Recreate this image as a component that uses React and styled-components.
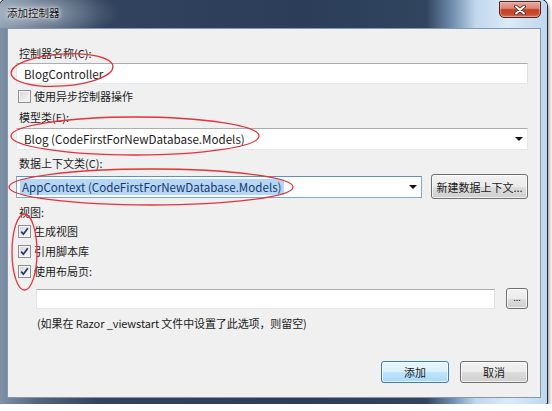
import React from 'react';
import styled, { createGlobalStyle } from 'styled-components';

const GlobalStyle = createGlobalStyle`
  html, body {
    margin: 0;
    padding: 0;
    background: #ffffff;
  }
  body {
    font-family: "Noto Sans CJK SC", "Noto Sans", sans-serif;
    font-size: 11px;
    color: #1b1b1b;
  }
`;

const Window = styled.div`
  position: relative;
  width: 547px;
  height: 404px;
  box-sizing: border-box;
  display: flex;
  flex-direction: column;
  border-radius: 6px 6px 2px 2px;
  background: linear-gradient(to right, #7f91a6 0%, #52657e 7%, #31435e 18%, #2b3d59 55%, #31455f 78%, #7593b2 83%, #c2d8ed 87%, #dbeaf7 93%, #bfd7ee 100%);
  box-shadow: 0 0 0 1px #1c2738, 2px 3px 4px rgba(0, 0, 0, 0.45);
`;

const TitleBar = styled.div`
  height: 28px;
  display: flex;
  align-items: flex-start;
  justify-content: space-between;
  padding: 0 6px 0 7px;
  border-radius: 6px 6px 0 0;
  background: radial-gradient(ellipse 90px 26px at 30px 13px, rgba(220, 226, 234, 0.55), rgba(220, 226, 234, 0) 100%);
`;

const Title = styled.div`
  margin-top: 5px;
  line-height: 16px;
  font-size: 10.5px;
  color: #141414;
  text-shadow: 0 0 6px rgba(255, 255, 255, 0.9), 0 0 3px rgba(255, 255, 255, 0.8);
`;

const CloseButton = styled.div`
  width: 42px;
  height: 17px;
  margin-top: 1px;
  box-sizing: border-box;
  border: 1px solid #4d2621;
  border-radius: 1px 1px 5px 5px;
  background: linear-gradient(#e9ab9c 0%, #d98672 42%, #c33e24 52%, #cc4f34 85%, #de7b5e 100%);
  box-shadow: inset 0 0 0 1px rgba(255, 200, 190, 0.45);
  display: flex;
  align-items: center;
  justify-content: center;
`;

const Panel = styled.div`
  flex: 1;
  margin: 0 6px 6px 7px;
  border: 1px solid #8397ad;
  background: #f0f0f0;
  padding: 16px 12px 0 8px;
  display: flex;
  flex-direction: column;
`;

const FieldLabel = styled.div`
  line-height: 16px;
  margin: ${p => p.$top || 0}px 0 0 3px;
`;

const TextBox = styled.div`
  height: ${p => p.$h || 21}px;
  margin-top: ${p => p.$top || 0}px;
  box-sizing: border-box;
  background: #ffffff;
  border: 1px solid #e3e9ef;
  border-top-color: #abadb3;
  border-left-color: #e2e3ea;
  border-right-color: #dbdfe6;
  padding-left: 7px;
  display: flex;
  align-items: center;
  flex: ${p => (p.$grow ? 1 : 'none')};
  font-size: 11.6px;
`;

const Combo = styled(TextBox)`
  position: relative;
  padding-left: ${p => (p.$selected ? 3 : 7)}px;
  padding-right: 18px;
  border-color: ${p => (p.$selected ? '#7ea9d6' : '#e3e9ef')};
  border-top-color: ${p => (p.$selected ? '#5b8fc7' : '#abadb3')};
`;

const Arrow = styled.span`
  position: absolute;
  right: 4px;
  top: 50%;
  margin-top: -2px;
  width: 0;
  height: 0;
  border-left: 4px solid transparent;
  border-right: 4px solid transparent;
  border-top: 4px solid #111;
`;

const Selection = styled.span`
  background: #b5d6f5;
  color: #17386d;
  padding: 0 2px;
  line-height: 16px;
`;

const Row = styled.div`
  display: flex;
  align-items: center;
  gap: ${p => p.$gap || 0}px;
  margin-top: ${p => p.$top || 0}px;
  padding-left: ${p => p.$indent || 0}px;
`;

const CheckRow = styled.label`
  display: flex;
  align-items: center;
  height: 16px;
  margin: ${p => p.$top || 0}px 0 0 2px;
  gap: 3px;
`;

const Box = styled.span`
  width: 13px;
  height: 13px;
  box-sizing: border-box;
  border: 1px solid #8e8f8f;
  background: linear-gradient(135deg, #d5d5d5 0%, #ececec 60%, #fbfbfb 100%);
  box-shadow: inset 0 0 0 1px #f4f4f4;
  display: flex;
  align-items: center;
  justify-content: center;
`;

const Button = styled.div`
  width: ${p => p.$w}px;
  height: ${p => p.$h || 22}px;
  box-sizing: border-box;
  border: 1px solid ${p => (p.$primary ? '#3c7fb1' : '#707070')};
  border-radius: 3px;
  background: ${p => (p.$primary
    ? 'linear-gradient(#eaf6fd 0%, #d9f0fc 50%, #bee6fd 51%, #a7d9f5 100%)'
    : 'linear-gradient(#f2f2f2 0%, #ebebeb 50%, #dddddd 51%, #cfcfcf 100%)')};
  box-shadow: inset 0 0 0 1px rgba(255, 255, 255, 0.7);
  display: flex;
  align-items: center;
  justify-content: center;
  font-size: 11px;
  color: #1b1b1b;
  white-space: nowrap;
`;

const Dots = styled.span`
  font-size: 9px;
  margin-top: -2px;
`;

const Hint = styled.div`
  line-height: 16px;
  font-size: 11px;
  letter-spacing: -0.1px;
  margin: 6px 0 0 21px;
`;

const Footer = styled.div`
  display: flex;
  justify-content: flex-end;
  gap: 11px;
  margin-top: 30px;
`;

const Marks = styled.svg`
  position: absolute;
  left: 0;
  top: 0;
  pointer-events: none;
`;

function Check({ on }) {
  return (
    <Box>
      {on && (
        <svg width="9" height="9" viewBox="0 0 9 9">
          <path d="M1.2 4.6 L3.4 7.2 L7.8 1.2" fill="none" stroke="#22356f" strokeWidth="1.7" />
        </svg>
      )}
    </Box>
  );
}

export default function App() {
  return (
    <>
      <GlobalStyle />
      <Window>
        <TitleBar>
          <Title>添加控制器</Title>
          <CloseButton>
            <svg width="12" height="10" viewBox="0 0 12 10">
              <path d="M2 1.5 L10 8.5 M10 1.5 L2 8.5" stroke="#3b2420" strokeWidth="3.6" strokeLinecap="round" />
              <path d="M2 1.5 L10 8.5 M10 1.5 L2 8.5" stroke="#ffffff" strokeWidth="2" strokeLinecap="round" />
            </svg>
          </CloseButton>
        </TitleBar>
        <Panel>
          <FieldLabel>控制器名称(C):</FieldLabel>
          <TextBox $top={2}>BlogController</TextBox>
          <CheckRow $top={4}>
            <Check />
            使用异步控制器操作
          </CheckRow>
          <FieldLabel $top={5}>模型类(E):</FieldLabel>
          <Combo $top={3} $h={22}>
            Blog (CodeFirstForNewDatabase.Models)
            <Arrow />
          </Combo>
          <FieldLabel $top={5}>数据上下文类(C):</FieldLabel>
          <Row $top={3} $gap={9}>
            <Combo $grow $h={22} $selected>
              <Selection>AppContext (CodeFirstForNewDatabase.Models)</Selection>
              <Arrow />
            </Combo>
            <Button $w={97} $h={25}>新建数据上下文...</Button>
          </Row>
          <FieldLabel $top={5}>视图:</FieldLabel>
          <CheckRow $top={3}>
            <Check on />
            生成视图
          </CheckRow>
          <CheckRow $top={4}>
            <Check on />
            引用脚本库
          </CheckRow>
          <CheckRow $top={4}>
            <Check on />
            使用布局页:
          </CheckRow>
          <Row $top={9} $gap={11} $indent={20}>
            <TextBox $grow $h={20} />
            <Button $w={22} $h={21}>
              <Dots>...</Dots>
            </Button>
          </Row>
          <Hint>(如果在 Razor _viewstart 文件中设置了此选项，则留空)</Hint>
          <Footer>
            <Button $w={68} $primary>添加</Button>
            <Button $w={68}>取消</Button>
          </Footer>
        </Panel>
        <Marks width="547" height="404" viewBox="0 0 547 404">
          <g fill="none" stroke="#e3343a" strokeWidth="1.3">
            <ellipse cx="62" cy="70" rx="51" ry="16" transform="rotate(-4 62 70)" />
            <ellipse cx="135" cy="136" rx="124" ry="19" />
            <ellipse cx="151" cy="187" rx="142" ry="18" />
            <ellipse cx="24.5" cy="252" rx="12.5" ry="38" />
          </g>
        </Marks>
      </Window>
    </>
  );
}
